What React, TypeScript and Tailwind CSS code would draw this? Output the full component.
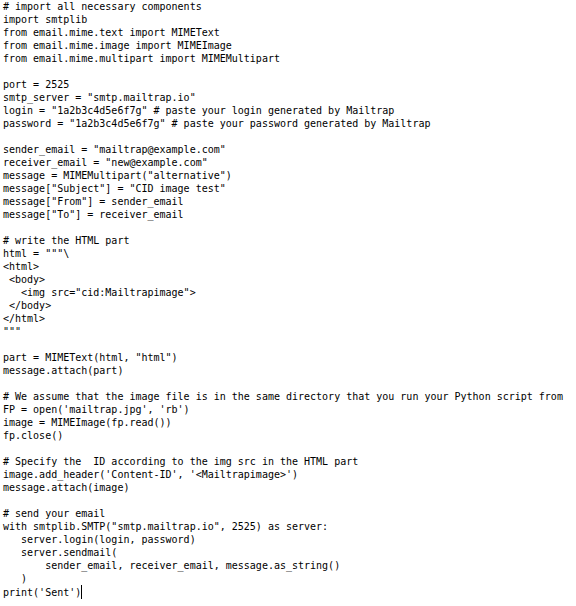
import React from 'react';

const code = `# import all necessary components
import smtplib
from email.mime.text import MIMEText
from email.mime.image import MIMEImage
from email.mime.multipart import MIMEMultipart

port = 2525
smtp_server = "smtp.mailtrap.io"
login = "1a2b3c4d5e6f7g" # paste your login generated by Mailtrap
password = "1a2b3c4d5e6f7g" # paste your password generated by Mailtrap

sender_email = "mailtrap@example.com"
receiver_email = "new@example.com"
message = MIMEMultipart("alternative")
message["Subject"] = "CID image test"
message["From"] = sender_email
message["To"] = receiver_email

# write the HTML part
html = """\\
<html>
 <body>
   <img src="cid:Mailtrapimage">
 </body>
</html>
"""

part = MIMEText(html, "html")
message.attach(part)

# We assume that the image file is in the same directory that you run your Python script from
FP = open('mailtrap.jpg', 'rb')
image = MIMEImage(fp.read())
fp.close()

# Specify the  ID according to the img src in the HTML part
image.add_header('Content-ID', '<Mailtrapimage>')
message.attach(image)

# send your email
with smtplib.SMTP("smtp.mailtrap.io", 2525) as server:
   server.login(login, password)
   server.sendmail(
       sender_email, receiver_email, message.as_string()
   )
print('Sent')`;

const App = () => {
  return (
    <div className="w-[576px] h-[606px] bg-white overflow-hidden">
      <pre className="m-0 pl-[3px] pt-0 font-['DejaVu_Sans_Mono',monospace] text-[10px] leading-[13px] text-black">
        {code}
        <span className="inline-block w-px h-[14px] bg-black align-[-3px]" />
      </pre>
    </div>
  );
};

export default App;
